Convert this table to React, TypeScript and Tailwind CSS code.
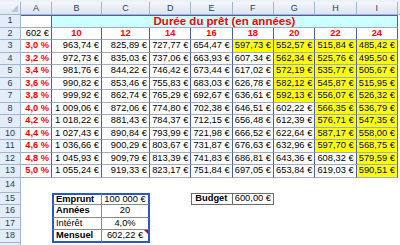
import React from "react";

const rates = ["3,0 %", "3,2 %", "3,4 %", "3,6 %", "3,8 %", "4,0 %", "4,2 %", "4,4 %", "4,6 %", "4,8 %", "5,0 %"];
const data: string[][] = [
  ["963,74", "825,89", "727,77", "654,47", "597,73", "552,57", "515,84", "485,42"],
  ["972,73", "835,03", "737,06", "663,93", "607,34", "562,34", "525,76", "495,50"],
  ["981,76", "844,22", "746,42", "673,44", "617,02", "572,19", "535,77", "505,67"],
  ["990,82", "853,46", "755,83", "683,03", "626,78", "582,12", "545,87", "515,95"],
  ["999,92", "862,74", "765,29", "692,67", "636,61", "592,13", "556,07", "526,32"],
  ["1 009,06", "872,06", "774,80", "702,38", "646,51", "602,22", "566,35", "536,79"],
  ["1 018,22", "881,43", "784,37", "712,15", "656,48", "612,39", "576,71", "547,35"],
  ["1 027,43", "890,84", "793,99", "721,98", "666,52", "622,64", "587,17", "558,00"],
  ["1 036,66", "900,29", "803,67", "731,87", "676,63", "632,96", "597,70", "568,75"],
  ["1 045,93", "909,79", "813,39", "741,83", "686,81", "643,36", "608,32", "579,59"],
  ["1 055,24", "919,33", "823,17", "751,84", "697,05", "653,84", "619,03", "590,51"],
];
const years = ["10", "12", "14", "16", "18", "20", "22", "24"];
const letters = ["A", "B", "C", "D", "E", "F", "G", "H", "I"];
const W = [
  "w-[31px]",
  "w-[50px]",
  "w-[48px]",
  "w-[41.33px]",
  "w-[41.33px]",
  "w-[41.33px]",
  "w-[41.33px]",
  "w-[41.33px]",
  "w-[41.33px]",
];

const grid = "border-r border-b border-r-[#4d5ea6] border-b-[#a3abc4]";

function RowHead({ n, h = "h-[12.5px]" }: { n?: number; h?: string }) {
  return (
    <div
      className={`${h} w-[21px] shrink-0 bg-[#e4ecf7] border-r border-b border-[#9eb6ce] flex items-center justify-center text-[9px] text-[#27415f]`}
    >
      {n}
    </div>
  );
}

function Row({ n, children, h = "h-[12.5px]" }: { n?: number; children?: React.ReactNode; h?: string }) {
  return (
    <div className={`flex ${h}`}>
      <RowHead n={n} h={h} />
      {children}
    </div>
  );
}

function toNum(s: string) {
  return parseFloat(s.replace(/ /g, "").replace(",", "."));
}

export default function App() {
  return (
    <div className="w-[400px] h-[245px] overflow-hidden bg-white font-['Liberation_Sans',Arial,sans-serif] text-[9.3px] leading-none text-black">
      <div className="h-[2px] bg-[#eef2f8]" />
      {/* column header */}
      <div className="flex h-[13px]">
        <div className="w-[21px] shrink-0 bg-[linear-gradient(#f4f7fb,#dfe7f2)] border-r border-b border-[#9eb6ce] flex">
          <svg width="20" height="12" viewBox="0 0 20 12">
            <polygon points="18,3 18,10 11,10" fill="#b9c7da" />
          </svg>
        </div>
        {letters.map((l, i) => (
          <div
            key={l}
            className={`${W[i]} shrink-0 bg-[linear-gradient(#f4f7fb,#dbe4f0)] border-r border-b border-[#9eb6ce] flex items-center justify-center text-[9px] text-[#27415f]`}
          >
            {l}
          </div>
        ))}
        <div className="flex-1 bg-[linear-gradient(#f4f7fb,#dbe4f0)] border-b border-[#9eb6ce]" />
      </div>
      {/* row 1 */}
      <Row n={1}>
        <div className={`${W[0]} shrink-0 ${grid} border-t border-t-[#4d5ea6]`} />
        <div
          className={`w-[346px] shrink-0 bg-[#ccffff] ${grid} border-t border-t-[#4d5ea6] flex items-center justify-center text-[11.5px] font-bold text-[#ff0000]`}
        >
          Durée du prêt (en années)
        </div>
      </Row>
      {/* row 2 */}
      <Row n={2}>
        <div className={`${W[0]} shrink-0 ${grid} flex items-center justify-end pr-[2px]`}>602 €</div>
        {years.map((y, i) => (
          <div
            key={y}
            className={`${W[i + 1]} shrink-0 ${grid} flex items-center justify-center font-bold text-[#ff0000]`}
          >
            {y}
          </div>
        ))}
      </Row>
      {data.map((r, ri) => (
        <Row key={ri} n={ri + 3}>
          <div className={`${W[0]} shrink-0 ${grid} flex items-center justify-end pr-[2px] font-bold text-[#ff0000]`}>
            {rates[ri]}
          </div>
          {r.map((v, ci) => {
            const y = toNum(v) <= 600;
            return (
              <div
                key={ci}
                className={`${W[ci + 1]} shrink-0 ${grid} flex items-center justify-end pr-[2px] whitespace-nowrap ${
                  y ? "bg-[#ffff00] text-[#000080]" : ""
                }`}
              >
                {v} €
              </div>
            );
          })}
        </Row>
      ))}
      <Row n={14} h="h-[15px]" />
      <Row n={15}>
        <div className={`${W[0]} shrink-0`} />
        <div className={`${W[1]} shrink-0 border-l-2 border-t-2 border-l-[#2a56c6] border-t-[#2a56c6] border-r border-b border-r-[#8a8a8a] border-b-[#8a8a8a] flex items-center pl-[2px] font-bold`}>
          Emprunt
        </div>
        <div className={`${W[2]} shrink-0 border-r-2 border-t-2 border-[#2a56c6] border-b border-b-[#8a8a8a] flex items-center justify-center`}>
          100 000 €
        </div>
        <div className={`${W[3]} shrink-0`} />
        <div className={`${W[4]} shrink-0 border border-[#6a6a6a] flex items-center pl-[3px] font-bold`}>Budget</div>
        <div className={`${W[5]} shrink-0 border border-l-0 border-[#6a6a6a] flex items-center justify-end pr-[2px]`}>
          600,00 €
        </div>
      </Row>
      <Row n={16}>
        <div className={`${W[0]} shrink-0`} />
        <div className={`${W[1]} shrink-0 border-l-2 border-l-[#2a56c6] border-r border-b border-r-[#8a8a8a] border-b-[#8a8a8a] flex items-center pl-[2px] font-bold`}>
          Années
        </div>
        <div className={`${W[2]} shrink-0 border-r-2 border-r-[#2a56c6] border-b border-b-[#8a8a8a] flex items-center justify-center`}>
          20
        </div>
      </Row>
      <Row n={17}>
        <div className={`${W[0]} shrink-0`} />
        <div className={`${W[1]} shrink-0 border-l-2 border-l-[#2a56c6] border-r border-b border-r-[#8a8a8a] border-b-[#8a8a8a] flex items-center pl-[2px]`}>
          Intérêt
        </div>
        <div className={`${W[2]} shrink-0 border-r-2 border-r-[#2a56c6] border-b border-b-[#8a8a8a] flex items-center justify-center`}>
          4,0%
        </div>
      </Row>
      <Row n={18}>
        <div className={`${W[0]} shrink-0`} />
        <div className={`${W[1]} shrink-0 border-l-2 border-b-2 border-l-[#2a56c6] border-b-[#2a56c6] border-r border-r-[#8a8a8a] flex items-center pl-[2px] font-bold`}>
          Mensuel
        </div>
        <div className={`${W[2]} shrink-0 relative border-r-2 border-b-2 border-[#2a56c6] flex items-center justify-center`}>
          602,22 €
          <div className="absolute top-0 right-0 w-0 h-0 border-l-[4px] border-l-transparent border-t-[4px] border-t-[#e00000]" />
        </div>
      </Row>
      <Row />
    </div>
  );
}
